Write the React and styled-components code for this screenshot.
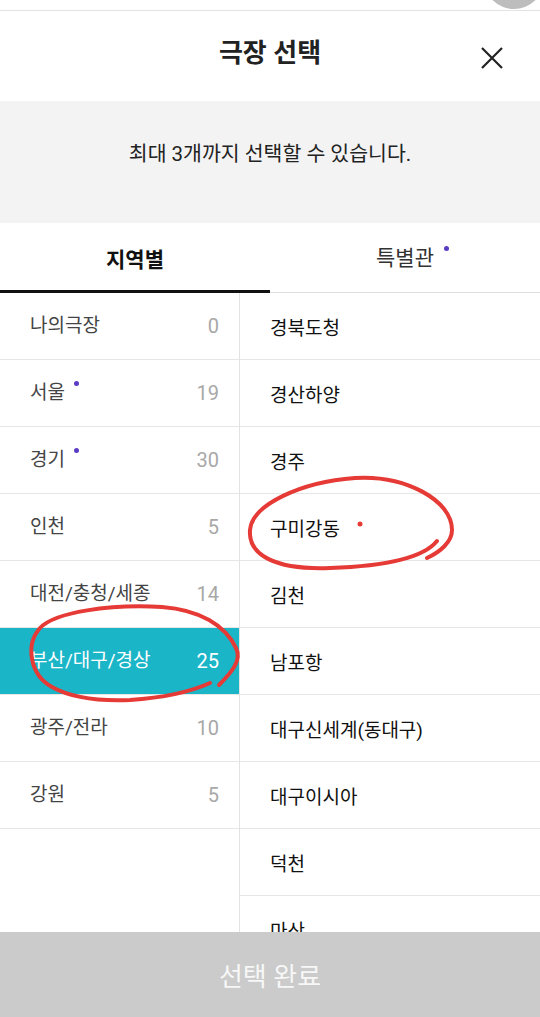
import React from "react";
import styled, { createGlobalStyle } from "styled-components";

const GlobalStyle = createGlobalStyle`
  html, body { margin: 0; padding: 0; background: #fff; }
  body {
    font-family: Roboto, "Noto Sans CJK KR", sans-serif;
    -webkit-font-smoothing: antialiased;
  }
  * { box-sizing: border-box; }
`;

const Page = styled.div`
  position: relative;
  width: 540px;
  height: 1017px;
  overflow: hidden;
  display: flex;
  flex-direction: column;
  background: #fff;
`;

const TopStrip = styled.div`
  position: relative;
  flex: none;
  height: 11px;
  border-bottom: 1px solid #e3e3e3;
`;

const FloatingButton = styled.div`
  position: absolute;
  left: 484px;
  top: -51px;
  width: 60px;
  height: 60px;
  border-radius: 50%;
  background: #bdbdbd;
`;

const Header = styled.header`
  flex: none;
  height: 90px;
  display: grid;
  grid-template-columns: 1fr auto 1fr;
  align-items: start;
  padding: 25px 37px 0 37px;
`;

const Title = styled.h1`
  grid-column: 2;
  margin: 0;
  font-size: 26px;
  line-height: 34px;
  font-weight: 700;
  color: #222;
`;

const CloseButton = styled.button`
  grid-column: 3;
  justify-self: end;
  margin-top: 11px;
  width: 22px;
  height: 22px;
  padding: 0;
  border: 0;
  background: none;
  display: flex;
`;

const Notice = styled.div`
  flex: none;
  height: 122px;
  background: #f3f3f3;
  padding-top: 39px;
  text-align: center;
  font-size: 20.5px;
  line-height: 28px;
  color: #222;
`;

const Tabs = styled.div`
  flex: none;
  height: 70px;
  display: grid;
  grid-template-columns: 1fr 1fr;
  box-shadow: inset 0 -1px 0 #dedede;
`;

const Tab = styled.button`
  display: flex;
  align-items: center;
  justify-content: center;
  border: 0;
  padding: 0;
  background: none;
  font-family: inherit;
  font-size: 21px;
  font-weight: ${(p) => (p.$active ? 700 : 400)};
  color: ${(p) => (p.$active ? "#111" : "#333")};
  box-shadow: ${(p) => (p.$active ? "inset 0 -3px 0 #111" : "none")};
`;

const Label = styled.span`
  position: relative;
  display: inline-block;
  line-height: 28px;
`;

const Dot = styled.i`
  position: absolute;
  top: 2px;
  left: calc(100% + ${(p) => p.$gap || 9}px);
  width: 5px;
  height: 5px;
  border-radius: 50%;
  background: #5b3cc4;
`;

const Body = styled.div`
  flex: 1;
  min-height: 0;
  overflow: hidden;
  display: grid;
  grid-template-columns: 240px 1fr;
  align-items: start;
`;

const RegionList = styled.ul`
  list-style: none;
  margin: 0;
  padding: 0;
  height: 100%;
  border-right: 1px solid #e3e3e3;
`;

const RegionRow = styled.li`
  height: 67px;
  display: flex;
  align-items: center;
  justify-content: space-between;
  padding: 0 20px 0 30px;
  border-bottom: 1px solid #e6e6e6;
  background: ${(p) => (p.$active ? "#1bb5c8" : "transparent")};
  color: ${(p) => (p.$active ? "#fff" : "#444")};
  font-size: 19px;
`;

const Count = styled.span`
  font-size: 20px;
  color: ${(p) => (p.$active ? "#fff" : "#a8a8a8")};
`;

const TheaterList = styled.ul`
  list-style: none;
  margin: 0;
  padding: 0;
`;

const TheaterRow = styled.li`
  height: 67px;
  display: flex;
  align-items: center;
  padding-left: 30px;
  border-bottom: 1px solid #e6e6e6;
  font-size: 19px;
  color: #111;
`;

const SubmitButton = styled.button`
  flex: none;
  height: 85px;
  border: 0;
  background: #cbcbcb;
  color: #f7f7f7;
  font-family: inherit;
  font-size: 26px;
  font-weight: 400;
`;

const Annotations = styled.svg`
  position: absolute;
  left: 0;
  top: 0;
  width: 540px;
  height: 1017px;
  pointer-events: none;
`;

const regions = [
  { name: "나의극장", count: 0 },
  { name: "서울", count: 19, dot: true },
  { name: "경기", count: 30, dot: true },
  { name: "인천", count: 5 },
  { name: "대전/충청/세종", count: 14 },
  { name: "부산/대구/경상", count: 25, active: true },
  { name: "광주/전라", count: 10 },
  { name: "강원", count: 5 },
];

const theaters = [
  "경북도청",
  "경산하양",
  "경주",
  "구미강동",
  "김천",
  "남포항",
  "대구신세계(동대구)",
  "대구이시아",
  "덕천",
  "마산",
];

export default function App() {
  return (
    <>
      <GlobalStyle />
      <Page>
        <TopStrip>
          <FloatingButton />
        </TopStrip>
        <Header>
          <Title>극장 선택</Title>
          <CloseButton aria-label="닫기">
            <svg width="22" height="22" viewBox="0 0 22 22">
              <path d="M1 1 L21 21 M21 1 L1 21" stroke="#222" strokeWidth="2.2" fill="none" />
            </svg>
          </CloseButton>
        </Header>
        <Notice>최대 3개까지 선택할 수 있습니다.</Notice>
        <Tabs>
          <Tab $active>지역별</Tab>
          <Tab>
            <Label>
              특별관
              <Dot $gap={10} />
            </Label>
          </Tab>
        </Tabs>
        <Body>
          <RegionList>
            {regions.map((r) => (
              <RegionRow key={r.name} $active={r.active}>
                <Label>
                  {r.name}
                  {r.dot && <Dot />}
                </Label>
                <Count $active={r.active}>{r.count}</Count>
              </RegionRow>
            ))}
          </RegionList>
          <TheaterList>
            {theaters.map((t) => (
              <TheaterRow key={t}>{t}</TheaterRow>
            ))}
          </TheaterList>
        </Body>
        <SubmitButton>선택 완료</SubmitButton>
        <Annotations viewBox="0 0 540 1017">
          <g fill="none" stroke="#e63a36" strokeWidth="4" strokeLinecap="round" strokeLinejoin="round">
            <path d="M219 685 C232 672, 242 660, 236 648 C225 625, 200 610, 162 607 C110 604, 55 612, 40 628 C25 645, 30 675, 52 687 C75 700, 105 701, 130 700 C160 698, 190 692, 210 683" />
            <path d="M437 541 C425 556, 390 566, 330 568 C275 570, 248 555, 250 530 C252 505, 300 482, 355 478 C405 475, 452 500, 452 530 C452 542, 440 552, 427 558" />
          </g>
          <circle cx="360" cy="524" r="2.5" fill="#e63a36" />
        </Annotations>
      </Page>
    </>
  );
}
